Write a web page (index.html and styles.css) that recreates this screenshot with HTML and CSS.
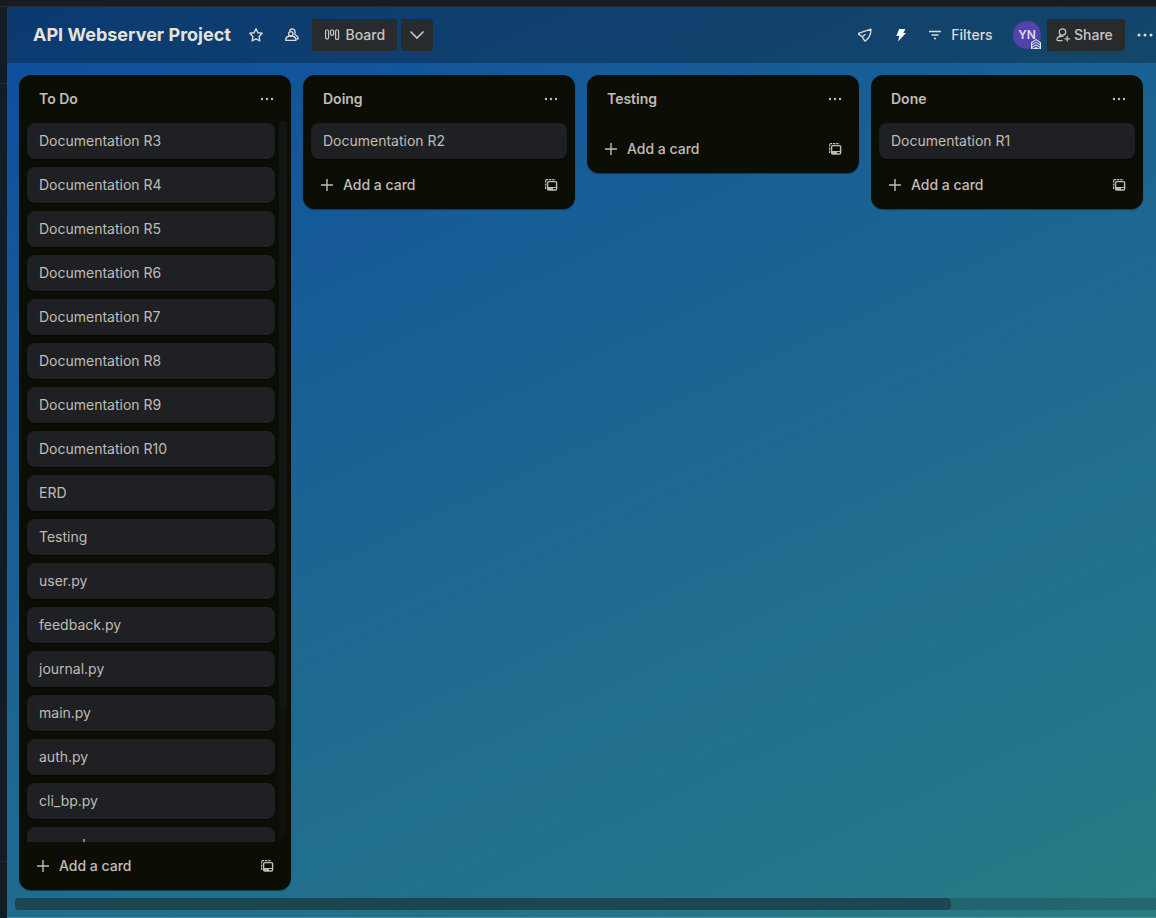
FILE: index.html
```html
<!DOCTYPE html>
<html lang="en">
<head>
<meta charset="utf-8">
<title>API Webserver Project</title>
<link rel="stylesheet" href="styles.css">
</head>
<body>
<svg class="defs" aria-hidden="true">
  <symbol id="dots" viewBox="0 0 16 16"><g fill="currentColor"><circle cx="3" cy="8" r="1.2"/><circle cx="8" cy="8" r="1.2"/><circle cx="13" cy="8" r="1.2"/></g></symbol>
  <symbol id="plus" viewBox="0 0 16 16"><path d="M8 2v12M2 8h12" fill="none" stroke="currentColor" stroke-width="1.4"/></symbol>
  <symbol id="template" viewBox="0 0 16 16"><path d="M2.600 12V2.600H12.500" fill="none" stroke="currentColor" stroke-width="1.200" stroke-dasharray="2.400 .8"/><rect x="4.600" y="4.600" width="9" height="8.400" rx="1.200" fill="none" stroke="currentColor" stroke-width="1.400"/><path d="M4.600 10h9v1H4.600zM5 11h5v2H5z" fill="currentColor"/></symbol>
</svg>
<div class="app">
  <div class="topbar"></div>
  <aside class="rail"><div class="rail-top"></div><div class="rail-mid"></div></aside>
  <main class="board">
    <header class="board-header">
      <h1 class="title">API Webserver Project</h1>
      <button class="icon-btn" aria-label="Star board"><svg viewBox="0 0 16 16"><path d="M8 1.700l1.900 4 4.300.6-3.100 3.100.7 4.400L8 11.800l-3.800 2 .7-4.400-3.100-3.100 4.300-.6z" fill="none" stroke="currentColor" stroke-width="1.400" stroke-linejoin="round"/></svg></button>
      <button class="icon-btn" aria-label="Visibility"><svg viewBox="0 0 16 16" fill="none" stroke="currentColor" stroke-width="1.300" stroke-linejoin="round"><circle cx="6.800" cy="6.800" r="2.200"/><path d="M1.600 13.300c0-2.600 2-4.300 5.200-4.300s5.200 1.700 5.200 4.300z"/><path d="M5.500 4c.7-1.700 2.200-2.300 3.600-1.800 1.900.7 2.500 2.700 1.800 4.300-.3.700 0 1.100.7 1.500 1.600.8 2.700 2 2.700 3.800H12"/></svg></button>
      <button class="btn btn-board"><svg viewBox="0 0 16 16" fill="none" stroke="currentColor" stroke-width="1.200"><rect x="1.600" y="3" width="3" height="8.800" rx="1"/><rect x="6.600" y="3" width="3" height="5.200" rx="1"/><rect x="11.600" y="3" width="3" height="9.400" rx="1"/></svg>Board</button>
      <button class="btn btn-down" aria-label="Switch view"><svg viewBox="0 0 16 16"><path d="M2 5l6 6 6-6" fill="none" stroke="currentColor" stroke-width="1.700" stroke-linecap="round"/></svg></button>
      <div class="tools">
        <button class="icon-btn" aria-label="Power-Ups"><svg viewBox="0 0 16 16"><path d="M14 2.200L2 6.200c-.6.200-.6.900-.1 1.200l3.300 2.400 2.500 4c.3.400.8.400 1 0l3.300-3.600c1.500-2.400 2-5 2-8zM5.200 9.800l3.300-2.600" fill="none" stroke="currentColor" stroke-width="1.300" stroke-linejoin="round"/></svg></button>
        <button class="icon-btn bright" aria-label="Automation"><svg viewBox="0 0 16 16"><path d="M6.200 2h6.200L10.300 6H13L5 14.500 6.300 9H3.300z" fill="currentColor"/></svg></button>
        <button class="filter"><svg viewBox="0 0 16 16"><path d="M2 4.500h12M4.500 8h7M7 11.500h2" stroke="currentColor" stroke-width="1.300"/></svg>Filters</button>
        <button class="avatar" aria-label="YN">YN<svg class="badge" viewBox="0 0 10 10"><path d="M0 3.500L5 0l5 3.500V10H0z" fill="#e4e7f5"/><path d="M1.200 4.600L5 2l3.800 2.600M1.200 7L5 4.500 8.800 7M1.600 9.300L5 7.200l3.400 2.100" fill="none" stroke="#343a94" stroke-width="1.100"/></svg></button>
        <button class="btn btn-share"><svg viewBox="0 0 16 16" fill="none" stroke="currentColor" stroke-width="1.300" stroke-linecap="round"><circle cx="7.500" cy="5" r="3.200"/><path d="M8 9.300C4.500 9 2 10.200 2 12.500c0 .8.500 1.200 1.200 1.200H7M5.500 8l-1.700 1.800M12.200 9.500v4.600M9.900 11.800h4.600"/></svg>Share</button>
        <button class="icon-btn more" aria-label="Board menu"><svg viewBox="0 0 16 16" fill="currentColor"><circle cx="2" cy="8" r="1.500"/><circle cx="8" cy="8" r="1.500"/><circle cx="14" cy="8" r="1.500"/></svg></button>
      </div>
    </header>
    <div class="lists">
      <section class="list tall">
        <div class="list-head"><h2>To Do</h2><button class="small" aria-label="List actions"><svg><use href="#dots"/></svg></button></div>
        <div class="scroll-area">
          <ol class="cards">
            <li>Documentation R3</li><li>Documentation R4</li><li>Documentation R5</li><li>Documentation R6</li><li>Documentation R7</li><li>Documentation R8</li><li>Documentation R9</li><li>Documentation R10</li><li>ERD</li><li>Testing</li><li>user.py</li><li>feedback.py</li><li>journal.py</li><li>main.py</li><li>auth.py</li><li>cli_bp.py</li><li>users_bp.py</li>
          </ol>
          <div class="vtrack"><div class="vthumb"></div></div>
        </div>
        <div class="list-foot"><button class="add"><svg><use href="#plus"/></svg>Add a card</button><button class="small" aria-label="Create from template"><svg><use href="#template"/></svg></button></div>
      </section>
      <section class="list">
        <div class="list-head"><h2>Doing</h2><button class="small" aria-label="List actions"><svg><use href="#dots"/></svg></button></div>
        <ol class="cards"><li>Documentation R2</li></ol>
        <div class="list-foot"><button class="add"><svg><use href="#plus"/></svg>Add a card</button><button class="small" aria-label="Create from template"><svg><use href="#template"/></svg></button></div>
      </section>
      <section class="list">
        <div class="list-head"><h2>Testing</h2><button class="small" aria-label="List actions"><svg><use href="#dots"/></svg></button></div>
        <ol class="cards"></ol>
        <div class="list-foot"><button class="add"><svg><use href="#plus"/></svg>Add a card</button><button class="small" aria-label="Create from template"><svg><use href="#template"/></svg></button></div>
      </section>
      <section class="list">
        <div class="list-head"><h2>Done</h2><button class="small" aria-label="List actions"><svg><use href="#dots"/></svg></button></div>
        <ol class="cards"><li>Documentation R1</li></ol>
        <div class="list-foot"><button class="add"><svg><use href="#plus"/></svg>Add a card</button><button class="small" aria-label="Create from template"><svg><use href="#template"/></svg></button></div>
      </section>
    </div>
    <div class="htrack"><div class="hthumb"></div></div>
  </main>
</div>
</body>
</html>
```
FILE: styles.css
```css
* { box-sizing: border-box; }
body {
  margin: 0;
  font: 14px/20px Inter, "Liberation Sans", sans-serif;
  color: #c1bcb4;
}
.defs { position: absolute; width: 0; height: 0; }
svg { display: block; width: 16px; height: 16px; flex: none; }
button {
  display: flex;
  align-items: center;
  justify-content: center;
  padding: 0;
  border: 0;
  background: none;
  color: inherit;
  font: inherit;
  font-weight: 500;
}
.app {
  height: 100vh;
  display: grid;
  grid-template: 7px minmax(0, 1fr) / 7px minmax(0, 1fr);
  overflow: hidden;
  background: #181b1f;
}
.topbar { grid-column: 1 / -1; border-bottom: 1px solid #25292d; }
.rail { display: flex; flex-direction: column; background: #131c24; }
.rail-top { height: 77px; border-bottom: 1px solid #252e35; }
.rail-mid { flex: 1; margin-bottom: 56px; border-bottom: 1px solid #252e35; }
.board {
  display: flex;
  flex-direction: column;
  min-width: 0;
  border-bottom: 1px solid #4a8c9c;
  background: linear-gradient(155deg, #0c4d9f 0%, #155a98 25%, #1d6791 52%, #25778a 88%, #297d80 100%);
}
.board-header {
  display: flex;
  align-items: center;
  height: 56px;
  flex: none;
  padding-left: 26px;
  background: rgba(10, 30, 45, 0.4);
  color: #dedad4;
}
.title { margin: 0 9px 0 0; font-size: 18px; line-height: 24px; font-weight: 700; color: #e6e3df; white-space: nowrap; }
.icon-btn { width: 32px; height: 32px; margin-right: 4px; }
.icon-btn.bright { color: #fff; }
.btn { height: 32px; border-radius: 3px; background: #272b2e; color: #c9c5be; }
.btn-board { gap: 6px; width: 85px; margin-right: 4px; }
.btn-down { width: 32px; }
.tools { display: flex; align-items: center; margin-left: auto; overflow: hidden; flex: none; }
.filter { gap: 8px; width: 72px; height: 32px; margin: 0 17px 0 3px; }
.avatar {
  position: relative;
  width: 28px;
  height: 28px;
  margin-right: 6px;
  border-radius: 50%;
  background: #5243aa;
  color: #dedcec;
  font-size: 12px;
  font-weight: 600;
}
.badge { position: absolute; right: 0; bottom: 0; width: 10px; height: 10px; }
.btn-share { gap: 3px; width: 78px; padding-left: 8px; margin-right: 12px; justify-content: flex-start; }
.more { width: 19px; margin: 0; justify-content: flex-start; }
.lists {
  display: flex;
  flex: 1;
  align-items: flex-start;
  gap: 12px;
  min-height: 0;
  padding: 12px 12px 8px;
}
.list {
  display: flex;
  flex-direction: column;
  flex: none;
  width: 272px;
  max-height: 100%;
  border-radius: 12px;
  background: #0c0e06;
  box-shadow: 0 1px 1px rgba(10, 20, 30, 0.5);
}
.list-head { display: flex; align-items: center; justify-content: space-between; height: 48px; flex: none; padding: 0 8px 0 20px; }
.list-head h2 { margin: 0; font-size: 14px; line-height: 20px; font-weight: 600; }
.small { width: 32px; height: 32px; }
.cards { display: flex; flex-direction: column; gap: 8px; flex: 1; min-width: 0; margin: 0; padding: 0 8px 2px; list-style: none; }
.cards li { flex: none; height: 36px; padding: 8px 12px; border-radius: 8px; background: #1e2023; box-shadow: 0 1px 1px rgba(0, 0, 0, 0.6); }
.scroll-area { display: flex; flex: 1; min-height: 0; }
.scroll-area .cards { overflow: hidden; padding-right: 4px; }
.vtrack { width: 8px; margin: -2px 4px 4px 0; border-radius: 4px; background: #0f120a; }
.vthumb { height: 82%; border-radius: 4px; background: #121714; }
.list-foot { display: flex; align-items: center; justify-content: space-between; height: 48px; flex: none; padding: 0 8px 0 16px; }
.add { gap: 8px; height: 32px; }
.htrack { flex: none; height: 12px; margin: 0 0 7px 8px; background: rgba(25, 70, 80, 0.4); border-radius: 4px 0 0 4px; }
.hthumb { width: 82%; height: 12px; border-radius: 4px; background: #1d4653; }
```
